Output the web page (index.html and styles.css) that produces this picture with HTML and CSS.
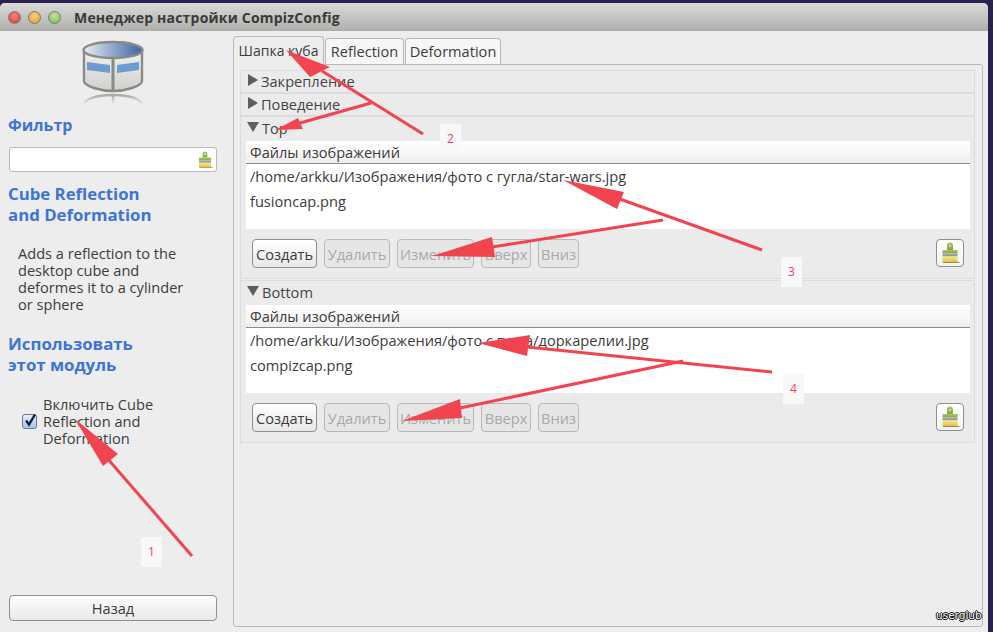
FILE: index.html
```html
<!DOCTYPE html>
<html lang="ru">
<head>
<meta charset="utf-8">
<title>Менеджер настройки CompizConfig</title>
<link rel="stylesheet" href="styles.css">
</head>
<body>
<svg width="0" height="0" class="defs">
  <defs>
    <linearGradient id="gFerrule" x1="0" y1="0" x2="0" y2="1"><stop offset="0" stop-color="#b0b0aa"/><stop offset="1" stop-color="#8d8d87"/></linearGradient>
    <linearGradient id="gBristle" x1="0" y1="0" x2="0" y2="1"><stop offset="0" stop-color="#f6ea8c"/><stop offset="1" stop-color="#dcc24a"/></linearGradient>
    <linearGradient id="gHandle" x1="0" y1="0" x2="0" y2="1"><stop offset="0" stop-color="#a9c768"/><stop offset="1" stop-color="#83a645"/></linearGradient>
    <linearGradient id="gTop" x1="0" y1="0" x2="1" y2="0"><stop offset="0" stop-color="#e8edf3"/><stop offset="1" stop-color="#3b63a4"/></linearGradient>
    <linearGradient id="gSide" x1="0" y1="0" x2="0" y2="1"><stop offset="0" stop-color="#f0f1ee"/><stop offset="1" stop-color="#cfd1cc"/></linearGradient>
    <linearGradient id="gFade" gradientUnits="userSpaceOnUse" x1="0" y1="54" x2="0" y2="64"><stop offset="0" stop-color="#8a8a86" stop-opacity="0.75"/><stop offset="1" stop-color="#8a8a86" stop-opacity="0.05"/></linearGradient>
    <symbol id="brush" viewBox="0 0 20 22">
      <path d="M7 8V3.500a3 3 0 0 1 6 0V8z" fill="url(#gHandle)"/>
      <circle cx="10" cy="4" r="1" fill="#dfe8c5"/>
      <path d="M2.500 8h15v3.500h-15z" fill="url(#gHandle)"/>
      <path d="M2.500 11.500h15v3h-15z" fill="url(#gFerrule)"/>
      <path d="M2.500 14.500h15v5.500h-15z" fill="url(#gBristle)"/>
      <path d="M3 20h16.500v1H3z" fill="#a58a3d"/>
    </symbol>
  </defs>
</svg>
<div class="window">
  <header class="titlebar">
    <span class="light red"></span><span class="light orange"></span><span class="light green"></span>
    <span class="wintitle">Менеджер настройки CompizConfig</span>
  </header>
  <div class="content">
    <aside class="sidebar">
      <svg class="logo" width="64" height="66" viewBox="0 0 64 66">
        <path d="M3 10v31c0 3 4 5 10 7 6 2 12 3 19 3s13-1 19-3c6-2 10-4 10-7V10z" fill="url(#gSide)" stroke="#8a8a86" stroke-width="2.400"/>
        <path d="M6 22l23 3v8l-23-3zM58 22l-22 3v8l22-3z" fill="#6f9bd3"/>
        <path d="M32 18v33" stroke="#8a8a86" stroke-width="3"/>
        <ellipse cx="32" cy="10" rx="29.500" ry="8" fill="url(#gTop)" stroke="#8a8a86" stroke-width="2.400"/>
        <path d="M3 64c2-5 12-9 29-9s27 4 29 9M32 55v9" fill="none" stroke="url(#gFade)" stroke-width="2.400"/>
      </svg>
      <h2 class="heading filter-h">Фильтр</h2>
      <div class="entry"><svg class="entry-icon" width="16" height="18"><use href="#brush"/></svg></div>
      <h2 class="heading plugin-h">Cube Reflection<br>and Deformation</h2>
      <p class="desc">Adds a reflection to the<br>desktop cube and<br>deformes it to a cylinder<br>or sphere</p>
      <h2 class="heading use-h">Использовать<br>этот модуль</h2>
      <label class="check-row">
        <span class="checkbox"><svg width="15" height="16" viewBox="0 0 15 16"><path d="M3 8.500l3 4 6-10" fill="none" stroke="#10203f" stroke-width="2.400"/></svg></span>
        <span class="check-text">Включить Cube<br>Reflection and<br>Deformation</span>
      </label>
      <button class="btn back">Назад</button>
    </aside>
    <main class="main">
      <nav class="tabs">
        <span class="tab active">Шапка куба</span>
        <span class="tab t2">Reflection</span>
        <span class="tab t3">Deformation</span>
      </nav>
      <div class="notebook">
        <section class="expander closed"><span class="arrow-r"></span>Закрепление</section>
        <section class="expander closed"><span class="arrow-r"></span>Поведение</section>
        <section class="expander open">
          <div class="exp-title"><span class="arrow-d"></span>Top</div>
          <div class="list-head">Файлы изображений</div>
          <div class="list">
            <div class="row">/home/arkku/Изображения/фото с гугла/star-wars.jpg</div>
            <div class="row">fusioncap.png</div>
          </div>
          <div class="buttons">
            <button class="btn create">Создать</button>
            <button class="btn off del">Удалить</button>
            <button class="btn off edit">Изменить</button>
            <button class="btn off up">Вверх</button>
            <button class="btn off down">Вниз</button>
            <button class="btn clean"><svg width="20" height="22"><use href="#brush"/></svg></button>
          </div>
        </section>
        <section class="expander open second">
          <div class="exp-title"><span class="arrow-d"></span>Bottom</div>
          <div class="list-head">Файлы изображений</div>
          <div class="list">
            <div class="row">/home/arkku/Изображения/фото с гугла/доркарелии.jpg</div>
            <div class="row">compizcap.png</div>
          </div>
          <div class="buttons">
            <button class="btn create">Создать</button>
            <button class="btn off del">Удалить</button>
            <button class="btn off edit">Изменить</button>
            <button class="btn off up">Вверх</button>
            <button class="btn off down">Вниз</button>
            <button class="btn clean"><svg width="20" height="22"><use href="#brush"/></svg></button>
          </div>
        </section>
      </div>
    </main>
  </div>
</div>
<svg class="annot" width="993" height="632" viewBox="0 0 993 632">
  <g class="shaft">
    <path d="M192 556L107 458"/>
    <path d="M423 134L322 71"/>
    <path d="M371 103L300 123"/>
    <path d="M762 250L617 198"/>
    <path d="M663 220L492 247"/>
    <path d="M772 372L527 347"/>
    <path d="M683 361L460 408"/>
  </g>
  <g class="head">
    <path d="M75 419L118 454L103 466z"/>
    <path d="M286 50L330 67L310 77z"/>
    <path d="M275 130L298 118L303 129z"/>
    <path d="M563 180L624 192L617 209z"/>
    <path d="M432 256L492 237L495 257z"/>
    <path d="M478 343L530 335L527 356z"/>
    <path d="M402 421L460 399L462 418z"/>
  </g>
</svg>
<span class="tag t-1">1</span>
<span class="tag t-2">2</span>
<span class="tag t-3">3</span>
<span class="tag t-4">4</span>
<span class="mark">userglub</span>
</body>
</html>
```

FILE: styles.css
```css
* { box-sizing: border-box; }
html, body { margin: 0; padding: 0; }
body {
  width: 993px;
  height: 632px;
  overflow: hidden;
  background: #2b2150;
  font-family: "Open Sans", "Noto Sans", sans-serif;
  font-size: 14.6px;
  color: #3c3c3c;
  position: relative;
  padding-top: 3px;
}
.defs { position: absolute; }
.window {
  width: 988px;
  height: 629px;
  background: #ededed;
  display: flex;
  flex-direction: column;
  border-radius: 5px 5px 0 0;
  overflow: hidden;
}
.titlebar {
  height: 28px;
  flex: none;
  display: flex;
  align-items: center;
  padding-left: 8px;
  background: linear-gradient(#dadad8, #aeaeac);
}
.light {
  width: 13px;
  height: 13px;
  border-radius: 50%;
  margin-right: 7px;
  border: 1px solid #777;
}
.red { background: radial-gradient(circle at 50% 35%, #f58a80, #d9322a); }
.orange { background: radial-gradient(circle at 50% 35%, #f7cf7a, #e09a28); }
.green { background: radial-gradient(circle at 50% 35%, #c5e39a, #82b450); }
.wintitle {
  margin-left: 6px;
  font-weight: 700;
  font-size: 14px;
  color: #3a3a38;
  letter-spacing: 0.2px;
}
.content { flex: 1; display: flex; min-height: 0; }
.sidebar {
  width: 233px;
  flex: none;
  display: flex;
  flex-direction: column;
  padding: 9px 16px 11px 9px;
}
.logo { align-self: center; flex: none; }
.heading {
  margin: 0 0 0 -1px;
  font-size: 16.8px;
  line-height: 21px;
  font-weight: 700;
  color: #3d74d6;
}
.filter-h { margin-top: 9px; font-size: 16px; }
.entry {
  margin-top: 11px;
  height: 25px;
  width: 208px;
  background: #fff;
  border: 1px solid #b9b9b9;
  border-radius: 3px;
  display: flex;
  align-items: center;
  justify-content: flex-end;
  padding-right: 3px;
}
.plugin-h { margin-top: 11px; }
.desc { margin: 20px 0 0 9px; line-height: 17px; white-space: nowrap; }
.use-h { margin-top: 20px; }
.check-row { display: flex; align-items: center; margin: 21px 0 0 13px; }
.checkbox {
  width: 15px;
  height: 15px;
  border: 1px solid #6b7898;
  border-radius: 3px;
  background: linear-gradient(#e8f0fb, #a9c4ea);
  display: block;
  flex: none;
  margin-right: 6px;
}
.checkbox svg { display: block; margin: -3px 0 0 0; overflow: visible; }
.check-text { line-height: 17px; white-space: nowrap; }
.btn {
  font: inherit;
  color: #3c3c3c;
  height: 29px;
  padding: 0;
  border: 1px solid #8f8f8f;
  border-radius: 4px;
  background: linear-gradient(#ffffff, #f1f1f1 55%, #e9e9e9);
  display: block;
}
.back { margin-top: auto; width: 208px; height: 26px; flex: none; }
.main { flex: 1; min-width: 0; display: flex; flex-direction: column; padding: 5px 5px 5px 0; }
.tabs { display: flex; height: 28px; flex: none; align-items: flex-end; position: relative; z-index: 1; }
.tab {
  height: 26px;
  line-height: 25px;
  text-align: center;
  border: 1px solid #b8b8b8;
  border-bottom: 0;
  border-radius: 4px 4px 0 0;
  background: #f6f6f6;
  margin-left: 1px;
}
.tab.active {
  width: 91px;
  height: 29px;
  margin: 0 0 -1px 0;
  background: #ededed;
  line-height: 28px;
  font-size: 14px;
}
.t2 { width: 79px; }
.t3 { width: 96px; }
.notebook {
  flex: 1;
  min-height: 0;
  border: 1px solid #b8b8b8;
  border-radius: 0 3px 3px 3px;
  background: #ededed;
  padding: 5px 7px 0 6px;
}
.expander { border: 1px solid #dcdcdc; background: #ebebeb; }
.closed { height: 23px; padding: 0 0 2px 7px; display: flex; align-items: center; color: #444; }
.open { height: 163px; padding: 0 4px 0 5px; }
.second { margin-top: 1px; }
.exp-title { height: 24px; padding: 0 0 3px 1px; display: flex; align-items: center; color: #444; }
.arrow-r { width: 0; height: 0; border-left: 10px solid #5e5e5e; border-top: 6px solid transparent; border-bottom: 6px solid transparent; margin-right: 3px; margin-top: -1px; }
.arrow-d { width: 0; height: 0; border-top: 10px solid #5e5e5e; border-left: 6px solid transparent; border-right: 6px solid transparent; margin-right: 3px; margin-top: -1px; }
.list-head {
  height: 23px;
  line-height: 22px;
  padding-left: 4px;
  background: linear-gradient(#ffffff, #f9f9f9 45%, #eeeeee);
  border-bottom: 1px solid #8a8a8a;
}
.list { background: #fff; height: 65px; padding: 0 4px; }
.row { height: 25px; line-height: 25px; white-space: nowrap; }
.buttons { display: flex; padding: 10px 0 0 6px; }
.create { width: 65px; }
.off {
  color: #a9a9a9;
  background: #e6e6e6;
  border-color: #b9b9b9;
  margin-left: 7px;
}
.del { width: 66px; }
.edit { width: 77px; }
.up { width: 50px; }
.down { width: 41px; }
.clean {
  width: 28px;
  height: 28px;
  margin-left: auto;
  margin-right: 6px;
  display: flex;
  align-items: center;
  justify-content: center;
  background: linear-gradient(#ffffff, #f3f3f3);
}
.annot { position: absolute; left: 0; top: 0; z-index: 2; pointer-events: none; }
.shaft path { stroke: #f2444f; stroke-width: 3; fill: none; }
.head path { fill: #f2444f; }
.tag {
  position: absolute;
  z-index: 3;
  width: 21px;
  height: 30px;
  background: #f8f8f8;
  color: #f0405a;
  font-size: 12px;
  line-height: 30px;
  text-align: center;
}
.t-1 { left: 141px; top: 537px; }
.t-2 { left: 440px; top: 124px; }
.t-3 { left: 781px; top: 257px; }
.t-4 { left: 783px; top: 374px; }
.mark {
  position: absolute;
  z-index: 3;
  left: 936px;
  top: 609px;
  font-family: "DejaVu Sans", sans-serif;
  font-size: 10.500px;
  line-height: 13px;
  color: #fff;
  text-shadow: 1px 0 #000, -1px 0 #000, 0 1px #000, 0 -1px #000;
}
```
